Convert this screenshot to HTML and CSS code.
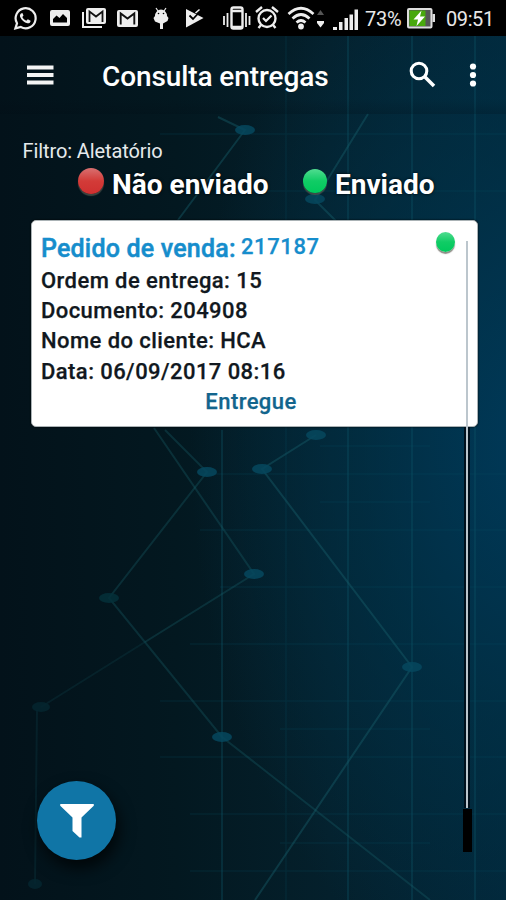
FILE: index.html
```html
<!DOCTYPE html>
<html lang="pt-BR">

<head>
    <meta charset="UTF-8">
    <meta name="viewport" content="width=device-width, initial-scale=1.0">
    <title>Consulta entregas</title>
    <link rel="stylesheet" href="styles.css">
</head>

<body>
    <div class="app">
        <!-- network background -->
        <svg class="backdrop" viewBox="0 0 506 900">
            <g class="grid">
                <path d="M348 36V900M412 36V900M475 36V900M222 430V900" />
                <path class="faint" d="M286 36V900M160 134H506M230 191H506M200 474H506M200 530H506M220 587H506M190 644H506M160 701H506M160 757H506M190 814H506M190 871H506M320 446H430M320 502H430M280 729H430M280 843H430" />
            </g>
            <g class="links">
                <path d="M218 117L245 130L178 220M368 114L315 200L340 225" />
                <path d="M316 435L262 469L412 667L255 900" />
                <path class="dim" d="M165 430L207 472L109 598L222 737L430 900" />
                <path class="dim" d="M154 428L254 574L145 642" />
                <path class="dimmer" d="M145 642L41 707M37 710L35 884" />
            </g>
            <g class="nodes">
                <ellipse cx="245" cy="130" rx="10" ry="5" />
                <ellipse cx="315" cy="199" rx="10" ry="5" />
                <ellipse cx="316" cy="435" rx="10" ry="5" />
                <ellipse cx="262" cy="469" rx="10" ry="5" />
                <ellipse cx="207" cy="472" rx="10" ry="5" />
                <ellipse cx="254" cy="574" rx="10" ry="5" />
                <ellipse cx="412" cy="667" rx="10" ry="5" />
                <ellipse cx="222" cy="737" rx="10" ry="5" />
                <ellipse class="dim" cx="109" cy="598" rx="10" ry="5" />
                <ellipse class="dimmer" cx="41" cy="707" rx="9" ry="5" />
                <ellipse class="dimmer" cx="35" cy="884" rx="7" ry="5" />
            </g>
        </svg>

        <div class="status-bar">
            <svg class="ico whatsapp" width="24" height="36" viewBox="0 0 24 36">
                <path d="M2.4 28.4L4 23.3A10 10 0 1 1 7.8 27Z" fill="none" stroke="#eee" stroke-width="2.2" />
                <path d="M8 13.5c-1 .8-1.3 2-.8 3.4 1.3 3.2 4 5.6 7.2 6.4 1.7.3 3.2-.8 3.2-2.6l-2.8-1.5-1.5 1.5c-1.9-.8-3.1-2-4-3.8l1.2-1.4-1.1-2.4z" fill="#eee" />
            </svg>
            <svg class="ico picture" width="20" height="36" viewBox="0 0 20 36">
                <path fill="#eee" fill-rule="evenodd" d="M2 10H18Q20 10 20 12V24Q20 26 18 26H2Q0 26 0 24V12Q0 10 2 10ZM3 22.500H17V18L13 14L9.500 18L6.500 15.500L3 19Z" />
            </svg>
            <svg class="ico mails" width="25" height="36" viewBox="0 0 25 36">
                <path d="M1 12V27H20" fill="none" stroke="#eee" stroke-width="2" />
                <rect x="4" y="8" width="20" height="16" rx="2" fill="#eee" />
                <path d="M7.500 22V11.500L14 16.500L20.500 11.500V22" fill="none" stroke="#111" stroke-width="1.800" />
            </svg>
            <svg class="ico mail" width="21" height="36" viewBox="0 0 21 36">
                <rect x="0" y="10" width="21" height="17" rx="2" fill="#eee" />
                <path d="M3.700 24.500V13.500L10.500 18.500L17.300 13.500V24.500" fill="none" stroke="#111" stroke-width="1.900" />
            </svg>
            <svg class="ico droid" width="16" height="36" viewBox="0 0 16 36">
                <path d="M3 8L5 11M13 8L11 11" stroke="#eee" stroke-width="1.200" />
                <path d="M2 16a6 6.500 0 0 1 12 0l1.500 2l-1 3L10 23.500V29H7V23.500L2 21.500L.5 18Z" fill="#eee" />
                <circle cx="5.500" cy="13.500" r=".8" /><circle cx="10.500" cy="13.500" r=".8" />
            </svg>
            <svg class="ico play" width="19" height="36" viewBox="0 0 19 36">
                <path d="M1 9L18.500 18L1 27.500Z" fill="#eee" />
                <path d="M4.500 15.500L8 19L15 11.500" fill="none" stroke="#000" stroke-width="1.800" />
                <path d="M10.500 13L14.500 9.500" stroke="#eee" stroke-width="1.600" />
            </svg>
            <svg class="ico vibrate" width="28" height="36" viewBox="0 0 28 36">
                <rect x="8.500" y="7.500" width="11" height="21" rx="2" fill="none" stroke="#eee" stroke-width="2.400" />
                <path d="M8 11H20M8 27H20" stroke="#eee" stroke-width="2.500" />
                <path d="M1 16V25M4.500 13V27M23 13V27M26.500 16V25" stroke="#eee" stroke-width="1.800" />
            </svg>
            <svg class="ico alarm" width="24" height="36" viewBox="0 0 24 36">
                <circle cx="12" cy="18.500" r="8.500" fill="none" stroke="#eee" stroke-width="2.400" />
                <path d="M1 12L7 7M23 12L17 7M6 25L3.500 28M18 25L20.500 28" stroke="#eee" stroke-width="2.400" />
                <path d="M8 18L11 21L16.500 15.500" fill="none" stroke="#eee" stroke-width="2.200" />
            </svg>
            <svg class="ico wifi" width="28" height="36" viewBox="0 0 28 36">
                <path d="M1.500 14Q14 2.500 26.500 14M5.500 18.500Q14 10.500 22.500 18.500M9.500 22.500Q14 18.500 18.500 22.500" fill="none" stroke="#eee" stroke-width="2.700" />
                <circle cx="14" cy="26.500" r="2.900" fill="#eee" />
            </svg>
            <svg class="ico updown" width="7" height="36" viewBox="0 0 7 36">
                <path d="M0 15L3.500 10L7 15Z" fill="#555" />
                <path d="M0 21H7V23L3.500 27.500L0 23Z" fill="#eee" />
            </svg>
            <svg class="ico signal" width="25" height="36" viewBox="0 0 25 36">
                <path d="M0 27H4V30H0ZM6 22H9.500V30H6ZM11.500 18H15V30H11.500ZM16.500 14.500H20V30H16.500ZM21.500 9.500H25V30H21.500Z" fill="#eee" />
            </svg>
            <span class="percent">73%</span>
            <svg class="ico battery" width="28" height="36" viewBox="0 0 28 36">
                <rect x="1" y="9" width="23.500" height="18.500" rx="1" fill="#555" stroke="#ddd" stroke-width="2" />
                <path d="M2.500 10.500H18.500V26H2.500Z" fill="#48a80c" />
                <path d="M25.500 14H28V22H25.500Z" fill="#ddd" />
                <path d="M14.500 10.500L6.500 19.500H11L9.500 26L18 16.500H13Z" fill="#fff" />
            </svg>
            <span class="clock">09:51</span>
        </div>

        <div class="toolbar">
            <svg class="menu" width="28" height="22" viewBox="0 0 28 22">
                <path d="M1 3.500H27.500M1 11H27.500M1 18.500H27.500" stroke="#f4f4f4" stroke-width="3.800" />
            </svg>
            <h1>Consulta entregas</h1>
            <svg class="search" width="27" height="28" viewBox="0 0 27 28">
                <circle cx="10" cy="10" r="7.800" fill="none" stroke="#fff" stroke-width="3.100" />
                <path d="M15.500 15.500L25 25" stroke="#fff" stroke-width="3.600" />
            </svg>
            <svg class="more" width="8" height="26" viewBox="0 0 8 26">
                <circle cx="4" cy="4.500" r="3.100" fill="#fff" />
                <circle cx="4" cy="13" r="3.100" fill="#fff" />
                <circle cx="4" cy="21.500" r="3.100" fill="#fff" />
            </svg>
        </div>

        <p class="filter-text">Filtro: Aletatório</p>

        <div class="legend">
            <span class="dot red"></span>
            <span class="not-sent">Não enviado</span>
            <span class="dot green"></span>
            <span class="sent">Enviado</span>
        </div>

        <div class="card">
            <div class="card-title">
                <span class="order-label">Pedido de venda:</span>
                <span class="order-number">217187</span>
                <span class="dot green small"></span>
            </div>
            <p>Ordem de entrega: 15</p>
            <p>Documento: 204908</p>
            <p>Nome do cliente: HCA</p>
            <p>Data: 06/09/2017 08:16</p>
            <p class="state">Entregue</p>
        </div>

        <div class="scroll-line"></div>
        <div class="scroll-end"></div>

        <button class="fab" aria-label="Filtrar">
            <svg width="36" height="36" viewBox="0 0 36 36">
                <path d="M1.500 1H34.500Q35.500 2 34.500 3L22.500 14.500V34.500L20.500 34.500L13.500 28V14.500L1.500 3Q.5 2 1.500 1Z" fill="#fff" />
            </svg>
        </button>
    </div>
</body>

</html>
```

FILE: styles.css
```css
body {
    margin: 0;
    font-family: Roboto, sans-serif;
    background-color: #03141b;
}

h1, p {
    margin: 0;
}

.app {
    position: relative;
    width: 506px;
    height: 900px;
    overflow: hidden;
    background:
        radial-gradient(ellipse 340px 560px at 530px 440px, rgba(0, 58, 90, 0.95), rgba(0, 52, 76, 0.6) 50%, rgba(0, 40, 60, 0) 100%),
        linear-gradient(90deg, #03121a 0%, #031820 35%, #04202c 65%, #022638 100%);
}

.backdrop {
    position: absolute;
    top: 0;
    left: 0;
    width: 506px;
    height: 900px;
}

.grid path {
    fill: none;
    stroke: #0b5568;
    stroke-width: 2;
    opacity: 0.33;
}

.grid .faint {
    stroke-width: 1.5;
    opacity: 0.2;
}

.links path {
    fill: none;
    stroke: #17606b;
    stroke-width: 2;
    opacity: 0.42;
}

.links .dim {
    opacity: 0.33;
}

.links .dimmer {
    opacity: 0.18;
}

.nodes ellipse {
    fill: #06485e;
    opacity: 0.85;
}

.nodes .dim {
    fill: #053039;
}

.nodes .dimmer {
    fill: #05262f;
}

/* status bar */
.status-bar {
    position: relative;
    display: flex;
    align-items: center;
    height: 36px;
    background: #000;
    color: #e8e8e8;
    font-size: 20px;
    white-space: nowrap;
}

.ico {
    flex: none;
}

.whatsapp { margin-left: 13px; }
.picture { margin-left: 13px; }
.mails { margin-left: 12px; }
.mail { margin-left: 10px; }
.droid { margin-left: 15px; }
.play { margin-left: 16px; }
.vibrate { margin-left: 19px; }
.alarm { margin-left: 4px; }
.wifi { margin-left: 8px; }
.updown { margin-left: 2px; }
.signal { margin-left: 9px; }
.percent { width: 38px; margin-left: 7px; padding-top: 2px; letter-spacing: -0.2px; }
.battery { margin-left: 4px; }
.clock { margin-left: 11px; padding-top: 2px; letter-spacing: -0.4px; }

/* toolbar */
.toolbar {
    position: relative;
    display: flex;
    align-items: center;
    height: 78px;
    color: #fff;
    background: linear-gradient(rgba(0, 10, 18, 0) 80%, rgba(0, 10, 18, 0.2) 100%);
}

.menu { margin: -1px 0 0 26px; }

.toolbar h1 {
    width: 307px;
    margin-left: 48px;
    padding-top: 3px;
    font-size: 28px;
    font-weight: 500;
    line-height: 32px;
    letter-spacing: -0.1px;
    white-space: nowrap;
}

.search { margin-left: 0; }
.more { margin-left: 33px; }

.filter-text {
    position: relative;
    height: 24px;
    margin: 25px 0 0 22.5px;
    color: #e6eaec;
    font-size: 20px;
    line-height: 25px;
    letter-spacing: -0.1px;
}

.legend {
    position: relative;
    display: flex;
    align-items: center;
    height: 34px;
    padding: 4px 0 0 78px;
    color: #fff;
    font-size: 28px;
    font-weight: 700;
    text-shadow: 0 0 3px #000;
    white-space: nowrap;
}

.dot {
    flex: none;
    width: 26px;
    height: 26px;
    margin-top: -7px;
    border-radius: 50%;
    box-shadow: 0 2px 1px rgba(90, 90, 80, 0.7);
}

.red {
    background: linear-gradient(#d87070, #d33b38 50%, #cf3030);
}

.green {
    background: linear-gradient(#50dc90, #10cc65 50%, #00c85c);
}

.not-sent {
    width: 157px;
    margin-left: 8px;
}

.legend .green {
    width: 24px;
    height: 24px;
    margin-right: 8px;
    margin-left: 34px;
}

/* delivery card */
.card {
    position: relative;
    box-sizing: border-box;
    width: 447px;
    height: 207px;
    margin: 19px 0 0 31px;
    padding: 13px 10px 0;
    border: 1px solid #aab2b5;
    border-radius: 5px;
    background: #fff;
    box-shadow: 0 0 2px #000;
    color: #111820;
    font-size: 22px;
    font-weight: 500;
    line-height: 30.4px;
    letter-spacing: 0.43px;
    white-space: nowrap;
    -webkit-text-stroke: 0.25px currentColor;
}

.card p {
    margin-left: -1px;
}

.card-title {
    display: flex;
    height: 31.5px;
    margin-left: -1px;
    color: #168dcc;
}

.order-label {
    width: 200px;
    font-size: 25px;
    letter-spacing: 0.2px;
    -webkit-text-stroke: 0.5px currentColor;
}

.order-number {
    width: 195px;
    margin-top: -2px;
    font-size: 22px;
    letter-spacing: 0.6px;
}

.small {
    width: 19px;
    height: 20px;
    margin-top: -2px;
}

.card .state {
    margin-left: -7px;
    text-align: center;
    color: #12658d;
}

/* scroll indicator */
.scroll-line {
    position: absolute;
    top: 241px;
    left: 466px;
    width: 2px;
    height: 567px;
    background: #bcc6cd;
}

.scroll-line::before {
    content: "";
    position: absolute;
    top: 186px;
    bottom: 0;
    left: -2px;
    right: -2px;
    border-left: 2px solid #00101c;
    border-right: 2px solid #00101c;
}

.scroll-end {
    position: absolute;
    top: 809px;
    left: 463px;
    width: 9px;
    height: 43px;
    background: #000;
}

.fab {
    position: absolute;
    left: 37px;
    top: 781px;
    display: flex;
    align-items: center;
    justify-content: center;
    width: 79px;
    height: 79px;
    padding: 0;
    border: none;
    border-radius: 50%;
    background: #1075a6;
    box-shadow: 3px 8px 16px rgba(0, 0, 0, 0.75);
}
```
